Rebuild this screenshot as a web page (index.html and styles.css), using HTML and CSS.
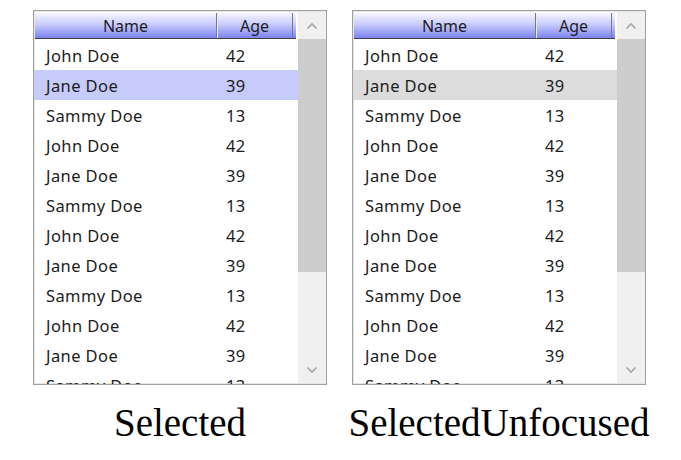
FILE: index.html
```html
<!DOCTYPE html>
<html>
<head>
<meta charset="utf-8">
<link rel="stylesheet" href="styles.css">
</head>
<body>
<div class="stage">
  <div class="panel">
    <div class="listview">
      <div class="content">
        <div class="header">
          <div class="hcol name">Name</div>
          <div class="hcol age">Age</div>
        </div>
        <div class="rows">
          <div class="row"><span class="c1">John Doe</span><span class="c2">42</span></div>
          <div class="row sel"><span class="c1">Jane Doe</span><span class="c2">39</span></div>
          <div class="row"><span class="c1">Sammy Doe</span><span class="c2">13</span></div>
          <div class="row"><span class="c1">John Doe</span><span class="c2">42</span></div>
          <div class="row"><span class="c1">Jane Doe</span><span class="c2">39</span></div>
          <div class="row"><span class="c1">Sammy Doe</span><span class="c2">13</span></div>
          <div class="row"><span class="c1">John Doe</span><span class="c2">42</span></div>
          <div class="row"><span class="c1">Jane Doe</span><span class="c2">39</span></div>
          <div class="row"><span class="c1">Sammy Doe</span><span class="c2">13</span></div>
          <div class="row"><span class="c1">John Doe</span><span class="c2">42</span></div>
          <div class="row"><span class="c1">Jane Doe</span><span class="c2">39</span></div>
          <div class="row"><span class="c1">Sammy Doe</span><span class="c2">13</span></div>
        </div>
      </div>
      <div class="scrollbar">
        <div class="btn"><svg width="12" height="8" viewBox="0 0 12 8"><path d="M1.5 6.5 L6 2 L10.5 6.5" fill="none" stroke="#a6a6a6" stroke-width="1.6"/></svg></div>
        <div class="thumb"></div>
        <div class="track"></div>
        <div class="btn"><svg width="12" height="8" viewBox="0 0 12 8"><path d="M1.5 1.5 L6 6 L10.5 1.5" fill="none" stroke="#a6a6a6" stroke-width="1.6"/></svg></div>
      </div>
    </div>
    <div class="label">Selected</div>
  </div>
  <div class="panel">
    <div class="listview">
      <div class="content">
        <div class="header">
          <div class="hcol name">Name</div>
          <div class="hcol age">Age</div>
        </div>
        <div class="rows">
          <div class="row"><span class="c1">John Doe</span><span class="c2">42</span></div>
          <div class="row unf"><span class="c1">Jane Doe</span><span class="c2">39</span></div>
          <div class="row"><span class="c1">Sammy Doe</span><span class="c2">13</span></div>
          <div class="row"><span class="c1">John Doe</span><span class="c2">42</span></div>
          <div class="row"><span class="c1">Jane Doe</span><span class="c2">39</span></div>
          <div class="row"><span class="c1">Sammy Doe</span><span class="c2">13</span></div>
          <div class="row"><span class="c1">John Doe</span><span class="c2">42</span></div>
          <div class="row"><span class="c1">Jane Doe</span><span class="c2">39</span></div>
          <div class="row"><span class="c1">Sammy Doe</span><span class="c2">13</span></div>
          <div class="row"><span class="c1">John Doe</span><span class="c2">42</span></div>
          <div class="row"><span class="c1">Jane Doe</span><span class="c2">39</span></div>
          <div class="row"><span class="c1">Sammy Doe</span><span class="c2">13</span></div>
        </div>
      </div>
      <div class="scrollbar">
        <div class="btn"><svg width="12" height="8" viewBox="0 0 12 8"><path d="M1.5 6.5 L6 2 L10.5 6.5" fill="none" stroke="#a6a6a6" stroke-width="1.6"/></svg></div>
        <div class="thumb"></div>
        <div class="track"></div>
        <div class="btn"><svg width="12" height="8" viewBox="0 0 12 8"><path d="M1.5 1.5 L6 6 L10.5 1.5" fill="none" stroke="#a6a6a6" stroke-width="1.6"/></svg></div>
      </div>
    </div>
    <div class="label">SelectedUnfocused</div>
  </div>
</div>
</body>
</html>
```
FILE: styles.css
```css
html, body {
  margin: 0;
  padding: 0;
  background: #ffffff;
}
.stage {
  display: flex;
  gap: 25px;
  padding: 10px 0 0 33px;
}
.panel {
  display: flex;
  flex-direction: column;
  align-items: center;
  width: 294px;
}
.listview {
  box-sizing: border-box;
  width: 294px;
  height: 375px;
  border: 1px solid #a0a0a0;
  box-shadow: inset 0 0 0 1px #e6e6e6;
  display: flex;
  overflow: hidden;
  background: #fff;
}
.content {
  flex: 1;
  display: flex;
  flex-direction: column;
  overflow: hidden;
  padding-top: 2px;
}
.header {
  flex: none;
  display: flex;
  height: 26px;
  margin-left: 1px;
  margin-right: 2px;
  box-sizing: border-box;
  border-bottom: 1px solid #404040;
  background: linear-gradient(to bottom, #f6f6ff 0%, #c9ccfb 45%, #7d83f3 100%);
  font-family: "Noto Sans", "Open Sans", sans-serif;
  font-size: 16px;
  color: #1e1e1e;
}
.hcol {
  display: flex;
  align-items: center;
  justify-content: center;
  box-sizing: border-box;
  line-height: 1;
}
.hcol.name {
  width: 182px;
  border-right: 1px solid #7a7a7a;
  box-shadow: 1px 0 0 #e8e8ff;
}
.hcol.age {
  width: 76px;
  border-right: 1px solid #7a7a7a;
}
.rows {
  flex: none;
  display: flex;
  flex-direction: column;
  margin-top: 1px;
}
.row {
  flex: none;
  height: 30px;
  display: flex;
  align-items: center;
  font-family: "Noto Sans", "Open Sans", sans-serif;
  font-size: 16.5px;
  letter-spacing: 0.4px;
  color: #1c1c1c;
}
.row.sel {
  background: #c7cbf9;
}
.row.unf {
  background: #dcdcdc;
}
.c1 {
  width: 192px;
  padding-left: 12px;
  box-sizing: border-box;
}
.c2 {
  padding-left: 0;
}
.scrollbar {
  flex: none;
  width: 28px;
  display: flex;
  flex-direction: column;
  background: #f0f0f0;
  margin: 1px 0 1px 0;
}
.btn {
  height: 27px;
  display: flex;
  align-items: center;
  justify-content: center;
  flex: none;
}
.thumb {
  height: 233px;
  background: #cdcdcd;
  flex: none;
}
.track {
  flex: 1;
}
.label {
  margin-top: 16px;
  font-family: "Liberation Serif", "Times New Roman", serif;
  font-size: 39px;
  line-height: 44px;
  color: #000;
  white-space: nowrap;
}
```
